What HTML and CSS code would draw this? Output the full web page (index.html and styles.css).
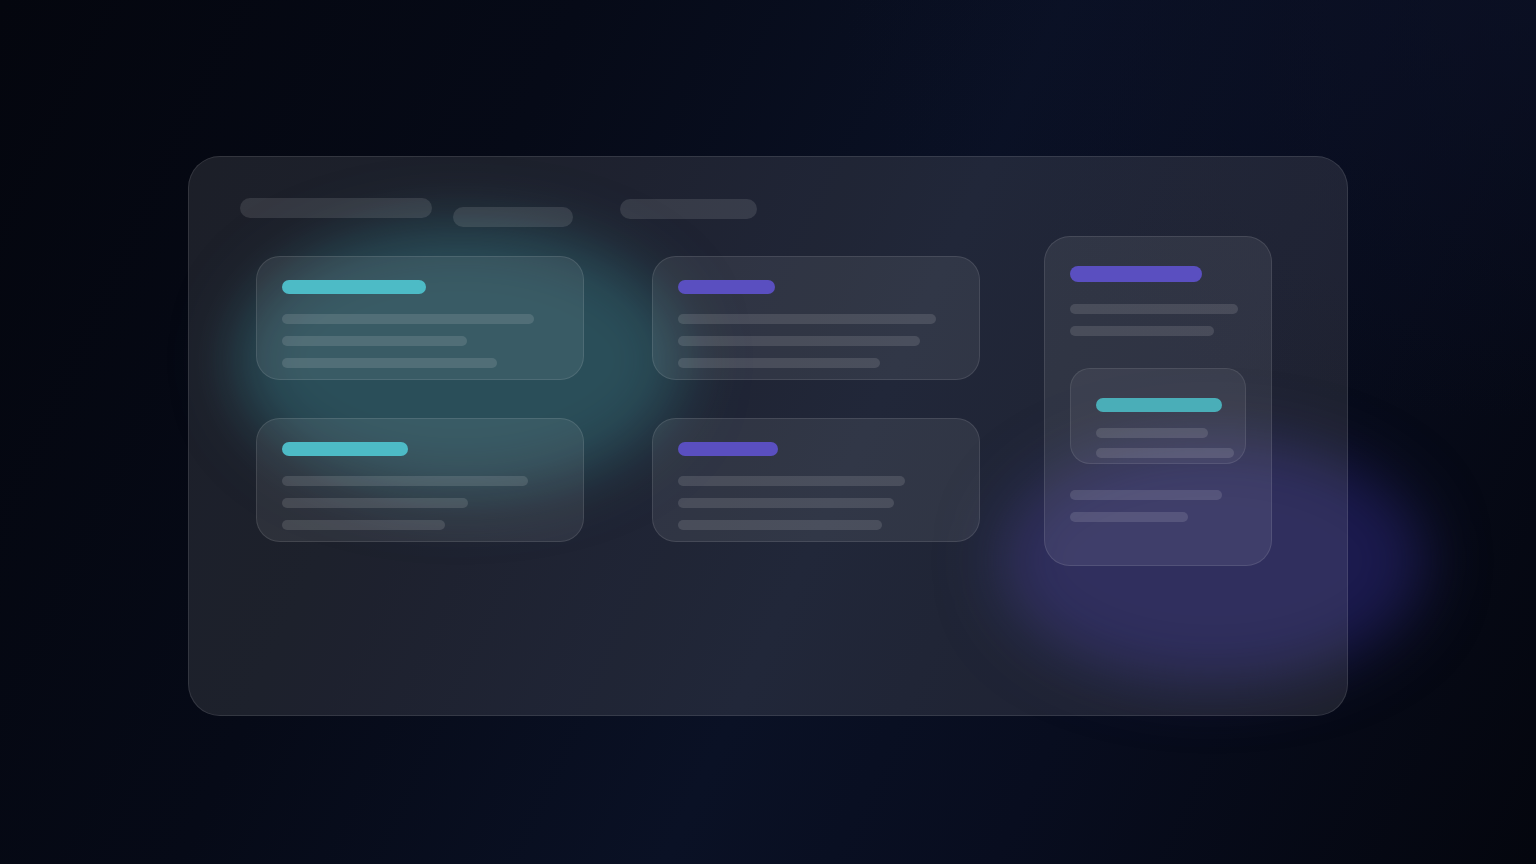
FILE: index.html
```html
<!DOCTYPE html>
<html lang="en">
<head>
<meta charset="utf-8">
<title>Glass board</title>
<link rel="stylesheet" href="styles.css">
</head>
<body>
<div class="blob blob-teal"></div>
<div class="blob blob-purple"></div>
<main class="stage">
  <section class="panel">
    <header class="panel-head">
      <div class="bar bar-a"></div>
      <div class="bar bar-b"></div>
      <div class="bar bar-c"></div>
    </header>
    <div class="panel-body">
      <div class="grid">
        <div class="card">
          <div class="title teal" style="width:144px"></div>
          <div class="line" style="width:252px"></div>
          <div class="line" style="width:185px"></div>
          <div class="line" style="width:215px"></div>
        </div>
        <div class="card">
          <div class="title purple" style="width:97px"></div>
          <div class="line" style="width:258px"></div>
          <div class="line" style="width:242px"></div>
          <div class="line" style="width:202px"></div>
        </div>
        <div class="card">
          <div class="title teal" style="width:126px"></div>
          <div class="line" style="width:246px"></div>
          <div class="line" style="width:186px"></div>
          <div class="line" style="width:163px"></div>
        </div>
        <div class="card">
          <div class="title purple" style="width:100px"></div>
          <div class="line" style="width:227px"></div>
          <div class="line" style="width:216px"></div>
          <div class="line" style="width:204px"></div>
        </div>
      </div>
      <aside class="side">
        <div class="side-title purple"></div>
        <div class="line" style="width:168px"></div>
        <div class="line" style="width:144px"></div>
        <div class="inner">
          <div class="inner-title"></div>
          <div class="line" style="width:112px"></div>
          <div class="line tight" style="width:138px"></div>
        </div>
        <div class="line" style="width:152px"></div>
        <div class="line" style="width:118px"></div>
      </aside>
    </div>
  </section>
</main>
</body>
</html>
```

FILE: styles.css
```css
* { box-sizing: border-box; }

html, body {
  margin: 0;
  height: 864px;
  overflow: hidden;
}

body {
  position: relative;
  font-family: "Inter", "Liberation Sans", sans-serif;
  background:
    radial-gradient(ellipse 700px 420px at 100% 0%, rgba(12,17,38,0.7), rgba(12,17,38,0) 100%),
    linear-gradient(115deg, #04060e 0%, #060a17 30%, #0a1125 55%, #080d1f 72%, #04060e 100%);
}

.blob {
  position: absolute;
  border-radius: 50%;
  filter: blur(30px);
  z-index: 0;
}

.blob-teal {
  left: 236px;
  top: 226px;
  width: 448px;
  height: 268px;
  background: rgb(20, 60, 72);
}

.blob-purple {
  left: 1000px;
  top: 438px;
  width: 425px;
  height: 245px;
  background: rgb(27, 26, 78);
}

.stage {
  position: relative;
  z-index: 1;
  display: flex;
  justify-content: center;
  padding-top: 156px;
}

.panel {
  width: 1160px;
  height: 560px;
  border-radius: 32px;
  background: rgba(255,255,255,0.095);
  border: 1px solid rgba(255,255,255,0.1);
  padding: 41px 0 0 51px;
}

.panel-head {
  display: flex;
  align-items: flex-start;
}

.bar {
  height: 20px;
  border-radius: 10px;
  background: rgba(255,255,255,0.11);
}

.bar-a { width: 192px; }
.bar-b { width: 120px; margin-left: 21px; margin-top: 9px; }
.bar-c { width: 137px; margin-left: 47px; margin-top: 1px; }

.panel-body {
  display: flex;
  align-items: flex-start;
  margin-top: 9px;
  margin-left: 16px;
}

.grid {
  display: grid;
  grid-template-columns: 328px 328px;
  grid-auto-rows: 124px;
  column-gap: 68px;
  row-gap: 38px;
  margin-top: 20px;
}

.card {
  border-radius: 24px;
  background: rgba(255,255,255,0.075);
  border: 1px solid rgba(255,255,255,0.1);
  padding: 23px 25px;
}

.title {
  height: 14px;
  border-radius: 7px;
  margin-bottom: 20px;
}

.teal { background: #4dbbc6; }
.purple { background: #5a4fc0; }

.line {
  height: 10px;
  border-radius: 5px;
  background: rgba(255,255,255,0.12);
  margin-bottom: 12px;
}

.side {
  width: 228px;
  height: 330px;
  margin-left: 64px;
  border-radius: 26px;
  background: rgba(255,255,255,0.075);
  border: 1px solid rgba(255,255,255,0.1);
  padding: 29px 25px;
}

.side-title {
  width: 132px;
  height: 16px;
  border-radius: 8px;
  margin-bottom: 22px;
}

.inner {
  width: 176px;
  height: 96px;
  margin-top: 32px;
  margin-bottom: 26px;
  border-radius: 20px;
  background: rgba(255,255,255,0.06);
  border: 1px solid rgba(255,255,255,0.09);
  padding: 29px 25px 0;
}

.inner-title {
  width: 126px;
  height: 14px;
  border-radius: 7px;
  margin-bottom: 16px;
  background: #4aaeb8;
}

.inner .line { margin-bottom: 10px; }
.inner .line.tight { margin-bottom: 0; }
```
